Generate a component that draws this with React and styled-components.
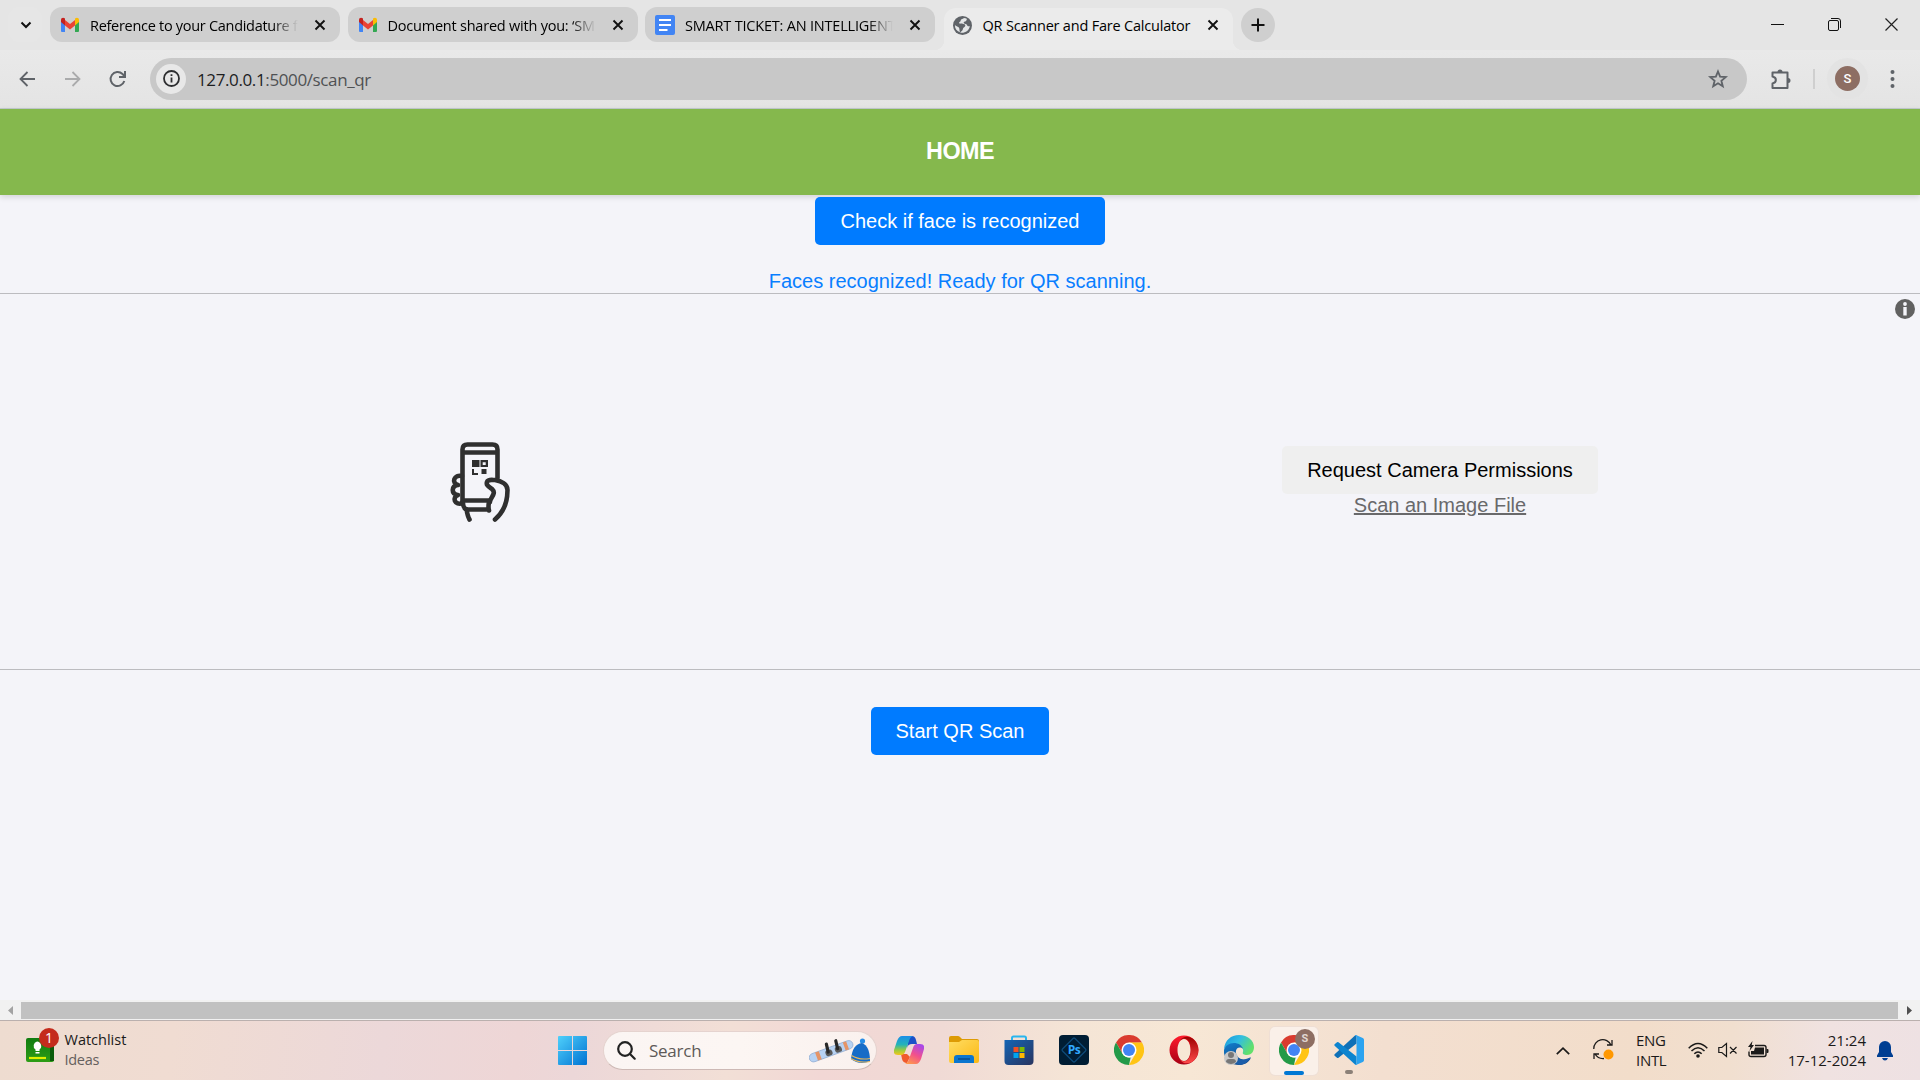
import React from "react";
import styled, { createGlobalStyle } from "styled-components";

const Global = createGlobalStyle`
  *, *::before, *::after { box-sizing: border-box; }
  html, body { margin: 0; padding: 0; overflow: hidden; }
  svg { display: block; flex: none; }
`;

const uiFont = `"Open Sans", "Noto Sans", sans-serif`;
const pageFont = `"Liberation Sans", Arial, sans-serif`;

const Screen = styled.div`
  width: 1920px;
  height: 1080px;
  display: flex;
  flex-direction: column;
  overflow: hidden;
  background: #f4f4f9;
  font-family: ${uiFont};
  color: #111;
`;

/* ---------- browser chrome ---------- */
const TabStrip = styled.div`
  height: 50px;
  flex: none;
  display: flex;
  align-items: flex-start;
  padding: 7px 0 0 8px;
  background: #e5e5e5;
`;
const TabSearch = styled.div`
  width: 34px;
  height: 35px;
  margin-right: 8px;
  padding-left: 1px;
  border-radius: 11px;
  background: #e6e6e6;
  display: grid;
  place-items: center;
`;
const Tab = styled.div`
  width: 290px;
  height: 35px;
  margin-right: 7.5px;
  padding: 0 10px;
  border-radius: 12px;
  background: #cfcfcf;
  display: flex;
  align-items: center;
`;
const ActiveTab = styled(Tab)`
  position: relative;
  width: 289px;
  height: 42px;
  margin: 1px 8px 0 1px;
  padding: 0 10px 8px 9px;
  border-radius: 12px 12px 0 0;
  background: #ebebeb;
  &::before, &::after {
    content: "";
    position: absolute;
    bottom: 0;
    width: 10px;
    height: 10px;
  }
  &::before { left: -10px; background: radial-gradient(circle at 0 0, transparent 10px, #ebebeb 10.5px); }
  &::after { right: -10px; background: radial-gradient(circle at 100% 0, transparent 10px, #ebebeb 10.5px); }
`;
const Favicon = styled.div`
  width: 20px;
  height: 20px;
  margin-right: 10px;
  display: grid;
  place-items: center;
`;
const TabTitle = styled.div`
  flex: 1;
  min-width: 0;
  padding-top: ${(p) => (p.$fade ? 2 : 1)}px;
  white-space: nowrap;
  font-size: 14.5px;
  line-height: 22px;
  letter-spacing: ${(p) => p.$track}px;
  color: #000;
  mask-image: ${(p) => (p.$fade ? "linear-gradient(90deg, #000 87%, transparent 99%)" : "none")};
`;
const TabClose = styled.div`
  width: 20px;
  margin-left: 10px;
  display: grid;
  place-items: center;
`;
const NewTab = styled.div`
  width: 34px;
  height: 34px;
  margin-top: 1px;
  border-radius: 50%;
  background: #cfcfcf;
  display: grid;
  place-items: center;
`;
const WindowControls = styled.div`
  margin-left: auto;
  display: flex;
  height: 35px;
`;
const WindowButton = styled.div`
  width: 57px;
  display: grid;
  place-items: center;
`;
const Toolbar = styled.div`
  height: 59px;
  flex: none;
  display: flex;
  align-items: center;
  padding: 0 19px 1px 17px;
  background: linear-gradient(#e9e9e9, #e4e4e4);
  border-bottom: 1px solid #c3cbce;
`;
const NavIcons = styled.div`
  display: flex;
  gap: 24px;
  width: 133px;
`;
const AddressBar = styled.div`
  width: 1597px;
  height: 42px;
  flex: none;
  border-radius: 21px;
  background: #c8c8c8;
  display: flex;
  align-items: center;
  padding: 0 18px 0 6px;
`;
const SiteInfo = styled.div`
  width: 30px;
  height: 30px;
  border-radius: 50%;
  background: #e8e8e8;
  display: grid;
  place-items: center;
  margin-right: 11px;
`;
const Url = styled.div`
  flex: 1;
  padding-top: 2px;
  font-size: 17px;
  line-height: 24px;
  letter-spacing: -0.38px;
  color: #4f5153;
  span { color: #1c1d1f; }
`;
const Actions = styled.div`
  flex: 1;
  display: flex;
  align-items: center;
  justify-content: flex-end;
`;
const Divider = styled.div`
  width: 2px;
  height: 20px;
  background: #cfcfcf;
  margin: 0 12px 0 21px;
`;
const AvatarRing = styled.div`
  width: 41px;
  height: 41px;
  border-radius: 50%;
  background: #e3e3e3;
  display: grid;
  place-items: center;
  margin-right: 15px;
`;
const Avatar = styled.div`
  width: ${(p) => p.$size}px;
  height: ${(p) => p.$size}px;
  border-radius: 50%;
  background: #8d6e63;
  color: #fff;
  display: grid;
  place-items: center;
  font: ${(p) => p.$weight} ${(p) => p.$text}px/1 Roboto, sans-serif;
`;

/* ---------- web page ---------- */
const Page = styled.main`
  height: 911px;
  flex: none;
  display: flex;
  flex-direction: column;
  align-items: center;
  background: #f4f4f9;
  font-family: ${pageFont};
  font-size: 20px;
`;
const NavBar = styled.header`
  width: 100%;
  height: 86px;
  flex: none;
  display: flex;
  align-items: center;
  justify-content: center;
  padding-bottom: 2px;
  background: #85b84d;
  box-shadow: 0 2px 6px rgba(0, 0, 0, 0.14);
  color: #fff;
  font-size: 23.4px;
  font-weight: 700;
  letter-spacing: -0.6px;
`;
const Button = styled.button`
  height: 48px;
  flex: none;
  width: ${(p) => p.$width}px;
  padding: 0;
  margin-top: ${(p) => p.$top || 0}px;
  border: 0;
  border-radius: 5px;
  background: ${(p) => (p.$plain ? "#efefef" : "#007bff")};
  color: ${(p) => (p.$plain ? "#000" : "#fff")};
  font-family: ${pageFont};
  font-size: 20px;
  line-height: 23px;
`;
const Status = styled.p`
  margin: 25px 0 0;
  height: 23px;
  line-height: 23px;
  color: #087eff;
`;
const Reader = styled.section`
  position: relative;
  width: 100%;
  height: 377px;
  flex: none;
  display: grid;
  grid-template-columns: 1fr 1fr;
  border-top: 1px solid #bcbcc0;
  border-bottom: 1px solid #bcbcc0;
`;
const ReaderPane = styled.div`
  display: flex;
  flex-direction: column;
  align-items: center;
  padding-top: ${(p) => p.$top}px;
`;
const InfoBadge = styled.div`
  position: absolute;
  top: 5px;
  right: 5px;
`;
const FileLink = styled.span`
  line-height: 23px;
  color: #69696b;
  text-decoration: underline;
  text-decoration-thickness: 2px;
  text-underline-offset: 1px;
`;
const ScrollBar = styled.div`
  width: 100%;
  height: 20px;
  margin-top: auto;
  display: flex;
  align-items: center;
  background: #f1f1f1;
`;
const ScrollArrow = styled.div`
  width: ${(p) => p.$width}px;
  display: flex;
  justify-content: center;
`;
const ScrollThumb = styled.div`
  flex: 1;
  height: 17px;
  margin-top: 1px;
  background: #c1c1c1;
`;

/* ---------- taskbar ---------- */
const Taskbar = styled.footer`
  height: 60px;
  flex: none;
  display: flex;
  align-items: center;
  border-top: 1px solid #bab0ae;
  background: linear-gradient(96deg, #eedcd0 0%, #f0dcd2 9%, #ecd8d9 20%, #eed6d6 27%, #ecd7d8 30%, #f2dfd6 38%, #f2d7d5 43%, #f0dad5 49%, #f5e5d6 56%, #f7e7d5 62%, #f3dfd0 72%, #f2ddca 85%, #f1dfcf 90%, #f0e2e1 95%, #eee1e3 100%);
`;
const Widget = styled.div`
  width: 558px;
  flex: none;
  display: flex;
  align-items: center;
  padding-left: 25px;
`;
const WidgetText = styled.div`
  margin-left: 5.5px;
  padding-bottom: 1px;
  font-size: 14.5px;
  line-height: 20px;
  letter-spacing: 0;
  color: #1b1a19;
  div + div { color: #65605d; letter-spacing: -0.3px; }
`;
const WidgetBadge = styled.div`
  position: absolute;
  left: 14px;
  top: -5px;
  width: 20px;
  height: 20px;
  border-radius: 50%;
  background: #c42b1c;
  color: #fff;
  font-size: 14px;
  line-height: 20px;
  text-align: center;
`;
const WidgetIcon = styled.div`
  position: relative;
  height: 32px;
  width: 34px;
  margin-bottom: 4px;
`;
const SearchBox = styled.div`
  width: 274px;
  height: 39px;
  margin: 0 17px 0 16px;
  border-radius: 20px;
  background: linear-gradient(90deg, #fbf5f3, #fcf6f3 50%, #faf1ee);
  border: 1px solid #e5d3cf;
  border-bottom-color: #cdb9b5;
  display: flex;
  align-items: center;
  padding: 0 5px 0 13px;
`;
const SearchLabel = styled.div`
  flex: 1;
  margin-left: 13px;
  font-size: 17px;
  letter-spacing: -0.25px;
  color: #5e5a58;
`;
const Apps = styled.div`
  display: flex;
  align-items: center;
  gap: 7px;
  margin-left: -9px;
`;
const AppSlot = styled.div`
  position: relative;
  width: 48px;
  height: 48px;
  border-radius: 5px;
  display: grid;
  place-items: center;
  padding-bottom: 1px;
  background: ${(p) => (p.$active ? "#faf0e9" : "transparent")};
  box-shadow: ${(p) => (p.$active ? "0 0 0 1px #efdfd5" : "none")};
`;
const RunMark = styled.div`
  position: absolute;
  bottom: ${(p) => (p.$active ? 0 : 1)}px;
  left: 50%;
  transform: translateX(-50%);
  width: ${(p) => (p.$active ? 20 : 8)}px;
  height: 4px;
  border-radius: 2px;
  background: ${(p) => (p.$active ? "#0078d4" : "#8b8078")};
`;
const Profile = styled.div`
  position: absolute;
  right: 3px;
  top: 2px;
  > div { color: #e0d6d2; }
`;
const Tray = styled.div`
  margin-left: auto;
  display: flex;
  align-items: center;
  padding-right: 26px;
  color: #1b1a19;
`;
const TrayLabel = styled.div`
  width: ${(p) => p.$width}px;
  margin-left: ${(p) => p.$left}px;
  text-align: ${(p) => p.$align || "left"};
  font-size: 15px;
  line-height: 20px;
  padding-bottom: 2px;
  white-space: nowrap;
  letter-spacing: ${(p) => p.$track || 0}px;
`;
const StatusIcons = styled.div`
  display: flex;
  align-items: center;
  gap: 10px;
  margin-left: 21px;
  padding-bottom: 1px;
`;
const Bell = styled.div`
  margin-left: 11px;
`;

/* ---------- icons ---------- */
const Gmail = () => (
  <svg width="20" height="16" viewBox="0 0 20 16">
    <path d="M1 3v11a1 1 0 0 0 1 1h3V6z" fill="#4285f4" />
    <path d="M19 3v11a1 1 0 0 1-1 1h-3V6z" fill="#34a853" />
    <path d="M5 3l5 4 5-4v5.500l-5 4-5-4z" fill="#ea4335" />
    <path d="M1 3c0-2 2-3 4-1.500v7L1 5z" fill="#c5221f" />
    <path d="M19 3c0-2-2-3-4-1.500v7L19 5z" fill="#fbbc04" />
  </svg>
);
const Docs = () => (
  <svg width="20" height="20" viewBox="0 0 20 20">
    <rect width="20" height="20" rx="2" fill="#4285f4" />
    <path d="M4 5h12M4 10h12M4 15h8.500" stroke="#fff" strokeWidth="2.200" />
  </svg>
);
const Globe = () => (
  <svg width="19" height="19" viewBox="2 2 20 20">
    <path fill="#5f6368" d="M12 2a10 10 0 1 0 0 20 10 10 0 0 0 0-20z" />
    <path fill="#e4e6e7" d="M13.500 4.200c-1 1.200-3.500 1-3.500 2.800 0 1.300-1.600 1-1.600 2.200 0 1.400 3.600.7 5.600 1.600 1.800.8.700 2.800-.6 3.400-1.200.6-.6 2-1.600 3-.7.700-1.700 1-2.200 2.300 4.500 1 9.600-2 10.100-7-1.200.6-2.600.3-3-1-.5-1.300-2.300-.8-3.200-1.800-.9-1.200.5-2.300 2-2.300.9 0 .4-1.600 1.400-2.200a8 8 0 0 0-3.400-1z" />
    <path fill="#e4e6e7" d="M4 11.500c1.500 1.800 4.600 1.700 4.700 3.800 0 1.300.4 2 .5 3.800C5.800 18 3.900 15 4 11.500z" />
  </svg>
);
const Cross = () => (
  <svg width="12" height="12" viewBox="0 0 12 12">
    <path d="M1.500 1.500l9 9m0-9l-9 9" stroke="#111" strokeWidth="1.900" />
  </svg>
);
const PhoneInHand = () => (
  <svg width="80" height="80" viewBox="0 0 80 80" fill="none" stroke="#2f2f2f" strokeWidth="4.600" strokeLinecap="round" strokeLinejoin="round">
    <path d="M22.500 61V7.500q0-5 5-5h25q5 0 5 5V36M22.500 10.500h35M23 58.500h26" />
    <path d="M22 34c-8-2-11 7-4 9-7 1-7 9 0 10-6 2-4 11 5 8" />
    <path d="M22.500 60c1 5 2 7.500 4 7.500h21.500M49 60q-1 5 0 8.500M26.500 67q1 7 3 10.500" />
    <path d="M50 60c0-5 7-8 2-13-4-3-6-4-5-7 1-3 5-2 8-2 6 1 12.500 4 12.500 10 0 13-5.500 23.500-12.500 29.500" />
    <g stroke="none" fill="#2f2f2f">
      <path d="M32 18h7.500v7h-7.500zM32 27h2v4h4v2h-6zM41.500 27h5v5h-5z" />
      <path fillRule="evenodd" d="M40.500 18h7.500v7h-7.500zM42.700 20.200v2.800h3v-2.800z" />
    </g>
  </svg>
);
const Chrome = () => (
  <svg width="30" height="30" viewBox="0 0 48 48">
    <path fill="#da3b2f" d="M3.200 12A24 24 0 0 1 44.800 12L24 12.500 13.600 30z" />
    <path fill="#ffc414" d="M44.800 12A24 24 0 0 1 24 48L34.400 30 24 12z" />
    <path fill="#239a48" d="M24 48A24 24 0 0 1 3.200 12L13.600 30q4 7 13 6z" />
    <circle cx="24" cy="24" r="12" fill="#fff" />
    <circle cx="24" cy="24" r="9.600" fill="#4284f3" />
  </svg>
);
const Copilot = () => (
  <svg width="30" height="28" viewBox="0 0 30 28">
    <defs>
      <linearGradient id="cpa" x1="0" y1="0" x2="0" y2="1"><stop offset="0" stopColor="#1b8ee8" /><stop offset=".45" stopColor="#23b3b9" /><stop offset=".75" stopColor="#9ccb3c" /><stop offset="1" stopColor="#f4c51c" /></linearGradient>
      <linearGradient id="cpb" x1=".7" y1="0" x2=".2" y2="1"><stop offset="0" stopColor="#a948e8" /><stop offset=".5" stopColor="#f2508c" /><stop offset="1" stopColor="#ff9a4a" /></linearGradient>
    </defs>
    <path d="M15 0h3q3 0 4 4l1 4h-5q-4 0-5 4z" fill="#1b50c8" />
    <path d="M7 18h6l3 3-3 6q-4 0-5-4z" fill="#f05a2c" />
    <path d="M8 0h11q-3 1-4 5l-4 11q-1 3-4 3H4q-5 0-4-5L3 5q2-5 5-5z" fill="url(#cpa)" />
    <path d="M22 28H11q3-1 4-5l4-11q1-4 4-4h3q5 0 4 5l-3 10q-2 5-5 5z" fill="url(#cpb)" />
  </svg>
);
const Explorer = () => (
  <svg width="30" height="28" viewBox="0 0 30 28">
    <defs><linearGradient id="fold" x2="1" y2="1"><stop stopColor="#ffdd63" /><stop offset="1" stopColor="#fbb813" /></linearGradient></defs>
    <path d="M0 2q0-2 2-2h7q1 0 2 1l2 2h15q2 0 2 2v5H0z" fill="#dd9b05" />
    <path d="M0 6h10l3-2h15q2 0 2 2v19q0 2-2 2H2q-2 0-2-2z" fill="url(#fold)" />
    <path d="M5 27v-5q0-3 3-3h14q3 0 3 3v5z" fill="#0b76cf" />
    <path d="M9 23h12" stroke="#064d8f" strokeWidth="1.500" />
  </svg>
);
const Store = () => (
  <svg width="30" height="30" viewBox="0 0 30 30">
    <defs><linearGradient id="bag" x2="1" y2="1"><stop stopColor="#1465b5" /><stop offset="1" stopColor="#29345f" /></linearGradient></defs>
    <path d="M8 7V3q0-1.500 1.500-1.500h11Q22 1.500 22 3v4" fill="none" stroke="#29b5ee" strokeWidth="2" />
    <path d="M.5 5h29v21q0 4-4 4h-21q-4 0-4-4z" fill="url(#bag)" />
    <path fill="#f25022" d="M9.500 12h5v5h-5z" /><path fill="#7fba00" d="M15.500 12h5v5h-5z" />
    <path fill="#00a4ef" d="M9.500 18h5v5h-5z" /><path fill="#ffb900" d="M15.500 18h5v5h-5z" />
  </svg>
);
const PsTile = styled.div`
  width: 30px;
  height: 30px;
  border-radius: 4px;
  background: #001d34;
  display: grid;
  place-items: center;
  > * { grid-area: 1 / 1; }
  span { font: 700 12px/1 "Open Sans", sans-serif; letter-spacing: -0.4px; color: #31a8ff; }
`;
const Photoshop = () => (
  <PsTile>
    <svg width="28" height="28" viewBox="0 0 28 28"><path d="M13 2.500q1-1 2 0L25.500 13q1 1 0 2L15 25.500q-1 1-2 0L2.500 15q-1-1 0-2z" fill="none" stroke="#0d4a78" strokeWidth="1.300" /></svg>
    <span>Ps</span>
  </PsTile>
);
const Opera = () => (
  <svg width="30" height="30" viewBox="0 0 30 30">
    <defs>
      <linearGradient id="opa" x2="0" y2="1"><stop stopColor="#ff1b2d" /><stop offset="1" stopColor="#a70014" /></linearGradient>
      <linearGradient id="opb" x2="0" y2="1"><stop stopColor="#9c0000" /><stop offset="1" stopColor="#ff4b4b" /></linearGradient>
    </defs>
    <path fillRule="evenodd" fill="url(#opa)" d="M15 .5a14.500 14.500 0 1 0 0 29 14.500 14.500 0 0 0 0-29zm0 3.500c4 0 6.500 5 6.500 11S19 26 15 26 8.500 21 8.500 15 11 4 15 4z" />
    <path fill="url(#opb)" d="M11 5.500C14 .5 20 .8 24 3.800a14.500 14.500 0 0 1 0 22.400c-4 3-10 3.300-13-1.700 6 5 11-1 11-9.500S17 .5 11 5.500z" />
  </svg>
);
const Edge = () => (
  <svg width="30" height="30" viewBox="0 0 30 30">
    <defs>
      <linearGradient id="ega" x2="1" y2=".5"><stop stopColor="#1795dc" /><stop offset=".5" stopColor="#32bde2" /><stop offset="1" stopColor="#62e06b" /></linearGradient>
      <linearGradient id="egb" x2=".5" y2="1"><stop stopColor="#127fce" /><stop offset="1" stopColor="#114a8b" /></linearGradient>
    </defs>
    <path d="M0 14C1 5 7 0 15 0c9 0 15 6 15 12 0 5-3 8-7 8-3 0-5-1-4-3 1-3-2-8-8-8-5 0-9 2-11 5z" fill="url(#ega)" />
    <path d="M0 15c1-4 5-7 10-7 4 0 8 2 9 6-3-3-8-1-7 4 1 6 9 9 15 5-3 5-7 7-12 7C7 30-1 24 0 15z" fill="url(#egb)" />
    <path d="M12 14c-4 8 5 14 15 8-3 5-7 8-12 8-5-2-9-9-3-16z" fill="#1b5da9" />
    <circle cx="7" cy="23" r="7" fill="#c8c8c8" />
    <circle cx="7" cy="20" r="3" fill="#777" /><path d="M2 27q0-3 3-3h4q3 0 3 3-5 4-10 0z" fill="#777" />
  </svg>
);
const VSCode = () => (
  <svg width="30" height="30" viewBox="0 0 100 100">
    <path d="M75 2v26L15 76q-3 2-5 0l-7-6q-4-3 0-7L70 2q3-3 5 0z" fill="#0f70b7" />
    <path d="M75 98V72L15 24q-3-2-5 0l-7 6q-4 3 0 7L70 98q3 3 5 0z" fill="#0d84cf" />
    <path d="M73 0l23 10q4 2 4 6v68q0 4-4 6L73 100q-3 0-3-4 5 3 5-3V7q0-6-5-3 0-4 3-4z" fill="#2ba3f0" />
  </svg>
);
const Snow = () => (
  <svg width="62" height="30" viewBox="0 0 62 30">
    <g transform="rotate(-20 22 15)">
      <rect x="-1" y="11" width="46" height="8.500" rx="4.200" fill="#b7d2f3" stroke="#8fabd2" strokeWidth=".7" />
      <path d="M6.500 11h4v8.500h-4zM36 11h3.500v8.500H36z" fill="#e59467" />
      <rect x="16" y="13" width="7" height="6" rx="2.500" fill="#5a5a5a" /><rect x="26" y="13" width="7" height="6" rx="2.500" fill="#5a5a5a" />
      <path d="M20 7l-1 8M30 7l-1 8" stroke="#282828" strokeWidth="3.200" strokeLinecap="round" />
    </g>
    <circle cx="53.500" cy="5" r="2.600" fill="#258ce6" />
    <path d="M42 23Q43.500 8 53 7q8 3 8 18-10 5-19-2z" fill="#176cc7" />
    <path d="M42.500 19.500q8 5 18.500 3M42 22.500q8 5 19 3" fill="none" stroke="#e9b75b" strokeWidth="1.100" />
  </svg>
);

const tabs = [
  { title: "Reference to your Candidature f", icon: <Gmail />, track: -0.29 },
  { title: "Document shared with you: ‘SM", icon: <Gmail />, track: -0.22 },
  { title: "SMART TICKET: AN INTELLIGENT", icon: <Docs />, track: -0.2 },
];
const pinned = [Copilot, Explorer, Store, Photoshop, Chrome, Opera, Edge];

export default function App() {
  return (
    <Screen>
      <Global />
      <TabStrip>
        <TabSearch>
          <svg width="12" height="8" viewBox="0 0 12 8" fill="none" stroke="#111" strokeWidth="2"><path d="M1.500 1.500L6 6l4.500-4.500" /></svg>
        </TabSearch>
        {tabs.map((t) => (
          <Tab key={t.title}>
            <Favicon>{t.icon}</Favicon>
            <TabTitle $fade $track={t.track}>{t.title}</TabTitle>
            <TabClose><Cross /></TabClose>
          </Tab>
        ))}
        <ActiveTab>
          <Favicon><Globe /></Favicon>
          <TabTitle $track={-0.2}>QR Scanner and Fare Calculator</TabTitle>
          <TabClose><Cross /></TabClose>
        </ActiveTab>
        <NewTab>
          <svg width="14" height="14" viewBox="0 0 14 14" stroke="#111" strokeWidth="2"><path d="M7 .5v13M.5 7h13" /></svg>
        </NewTab>
        <WindowControls>
          <WindowButton><svg width="13" height="13" viewBox="0 0 13 13"><path d="M0 6.500h13" stroke="#111" /></svg></WindowButton>
          <WindowButton><svg width="13" height="13" viewBox="0 0 13 13" fill="none" stroke="#111"><rect x=".5" y="2.500" width="10" height="10" rx="1.500" /><path d="M3 .5h7q2.500 0 2.500 2.500v7" /></svg></WindowButton>
          <WindowButton><svg width="13" height="13" viewBox="0 0 13 13"><path d="M.5.5l12 12m0-12l-12 12" stroke="#222" strokeWidth="1.200" /></svg></WindowButton>
        </WindowControls>
      </TabStrip>
      <Toolbar>
        <NavIcons>
          <svg width="21" height="20" viewBox="0 0 21 20" fill="none" stroke="#5f6368" strokeWidth="1.800"><path d="M18 10H4M10.500 3L3.500 10l7 7" /></svg>
          <svg width="21" height="20" viewBox="0 0 21 20" fill="none" stroke="#aaabac" strokeWidth="1.800"><path d="M3 10h14M10.500 3l7 7-7 7" /></svg>
          <svg width="21" height="20" viewBox="0 0 21 20" fill="none" stroke="#5f6368" strokeWidth="2"><path d="M17.300 12A7 7 0 1 1 15.500 5l2 2.200" /><path d="M18 2v6h-6" /></svg>
        </NavIcons>
        <AddressBar>
          <SiteInfo>
            <svg width="17" height="17" viewBox="0 0 17 17" fill="none" stroke="#2d2e30" strokeWidth="1.800"><circle cx="8.500" cy="8.500" r="7.500" /><path d="M8.500 7.500v5M8.500 4.300v1.800" /></svg>
          </SiteInfo>
          <Url><span>127.0.0.1</span>:5000/scan_qr</Url>
          <svg width="22" height="22" viewBox="0 0 24 24" fill="none" stroke="#5f6368" strokeWidth="2"><path d="M12 3.800l2.300 5.700 6.100.4-4.700 4 1.500 6-5.200-3.300-5.200 3.300 1.500-6-4.700-4 6.100-.4z" /></svg>
        </AddressBar>
        <Actions>
          <svg width="22" height="22" viewBox="0 0 22 22" fill="none" stroke="#5f6368" strokeWidth="2"><path d="M2.500 4.500h15V20h-15v-4.500c4.500-1 4.500-6 0-7z" strokeLinejoin="round" /><path d="M7.500 4a2.500 2.500 0 0 1 5 0zM18 10a2.500 2.500 0 0 1 0 5z" fill="#5f6368" stroke="none" /></svg>
          <Divider />
          <AvatarRing><Avatar $size={25} $text={13} $weight={500}>S</Avatar></AvatarRing>
          <svg width="18" height="20" viewBox="0 0 18 20" fill="#5f6368"><circle cx="9.500" cy="3" r="2" /><circle cx="9.500" cy="10" r="2" /><circle cx="9.500" cy="17" r="2" /></svg>
        </Actions>
      </Toolbar>

      <Page>
        <NavBar>HOME</NavBar>
        <Button $width={290} $top={2}>Check if face is recognized</Button>
        <Status>Faces recognized! Ready for QR scanning.</Status>
        <Reader>
          <ReaderPane $top={148}><PhoneInHand /></ReaderPane>
          <ReaderPane $top={152}>
            <Button $width={316} $plain>Request Camera Permissions</Button>
            <FileLink>Scan an Image File</FileLink>
          </ReaderPane>
          <InfoBadge>
            <svg width="20" height="20" viewBox="0 0 20 20"><circle cx="10" cy="10" r="10" fill="#616161" /><circle cx="10" cy="5" r="1.900" fill="#f4f4f9" /><path d="M8.300 8h3.400v8.500H8.300z" fill="#f4f4f9" /></svg>
          </InfoBadge>
        </Reader>
        <Button $width={178} $top={37}>Start QR Scan</Button>
        <ScrollBar>
          <ScrollArrow $width={21}><svg width="5" height="9" viewBox="0 0 5 9"><path d="M5 0v9L0 4.500z" fill="#a3a3a3" /></svg></ScrollArrow>
          <ScrollThumb />
          <ScrollArrow $width={22}><svg width="5" height="9" viewBox="0 0 5 9"><path d="M0 0v9l5-4.500z" fill="#505050" /></svg></ScrollArrow>
        </ScrollBar>
      </Page>

      <Taskbar>
        <Widget>
          <WidgetIcon>
            <svg width="30" height="32" viewBox="0 0 30 32">
              <defs><linearGradient id="wg" x2="0" y2="1"><stop stopColor="#107c10" /><stop offset="1" stopColor="#2d9d16" /></linearGradient></defs>
              <rect x="1" y="5" width="28" height="24" rx="2" fill="url(#wg)" /><path d="M25 5h4v23h-4z" fill="#0b5c0b" />
              <path d="M12 8.500a4.500 4.500 0 0 1 2.500 8v1.500h-4v-1.500a4.500 4.500 0 0 1 1.500-8zM10.500 19h4v1.500h-4z" fill="#fff" /><path d="M4 25h17" stroke="#dff000" strokeWidth="2.200" />
            </svg>
            <WidgetBadge>1</WidgetBadge>
          </WidgetIcon>
          <WidgetText><div>Watchlist</div><div>Ideas</div></WidgetText>
        </Widget>
        <svg width="29" height="29" viewBox="0 0 29 29">
          <defs><linearGradient id="win" x2="1" y2="1"><stop stopColor="#4fd0fb" /><stop offset="1" stopColor="#0072d2" /></linearGradient></defs>
          <path d="M1 0h13v14H0V1q0-1 1-1zM15 0h13q1 0 1 1v13H15zM0 15h14v14H1q-1 0-1-1zM15 15h14v13q0 1-1 1H15z" fill="url(#win)" />
        </svg>
        <SearchBox>
          <svg width="19" height="19" viewBox="0 0 19 19" fill="none" stroke="#222" strokeWidth="2.200" strokeLinecap="round"><circle cx="8" cy="8" r="6.800" /><path d="M13 13l4.700 4.700" /></svg>
          <SearchLabel>Search</SearchLabel>
          <Snow />
        </SearchBox>
        <Apps>
          {pinned.map((Icon, i) => <AppSlot key={i}><Icon /></AppSlot>)}
          <AppSlot $active>
            <Chrome />
            <Profile><Avatar $size={20} $text={11} $weight={700}>S</Avatar></Profile>
            <RunMark $active />
          </AppSlot>
          <AppSlot><VSCode /><RunMark /></AppSlot>
        </Apps>
        <Tray>
          <svg width="14" height="8" viewBox="0 0 14 8" fill="none" stroke="#1b1a19" strokeWidth="1.700"><path d="M.8 7.200L7 1.200l6.200 6" /></svg>
          <TrayLabel $width={20} $left={23}>
            <svg width="21" height="21" viewBox="0 0 21 21" fill="none" stroke="#1b1a19" strokeWidth="1.300"><path d="M.8 10A9 9 0 0 1 18 6M19 1v5h-5M1 20v-5h5M2 15q3 5 9 4.500" /><circle cx="15.500" cy="15.500" r="5" fill="#ff9800" stroke="none" /></svg>
          </TrayLabel>
          <TrayLabel $width={31} $left={23} $track={-0.3}>ENG<br />INTL</TrayLabel>
          <StatusIcons>
            <svg width="20" height="16" viewBox="0 0 20 16" fill="none" stroke="#1b1a19" strokeWidth="1.500"><path d="M.7 6.300q9.300-9.600 18.600 0M3.500 9q6.500-6.600 13 0M6.300 11.800q3.700-3.800 7.400 0" /><circle cx="10" cy="14" r="1.800" fill="#1b1a19" stroke="none" /></svg>
            <svg width="20" height="16" viewBox="0 0 20 16" fill="none" stroke="#1b1a19" strokeWidth="1.200"><path d="M.8 5.500h3l4.700-4v13l-4.700-4h-3zM12 5l6.500 6.500M18.500 5L12 11.500" /></svg>
            <svg width="21" height="18" viewBox="0 0 21 18"><path d="M7 4.500h9q2 0 2 2v7q0 2-2 2H3q-2 0-2-2v-3" fill="none" stroke="#1b1a19" strokeWidth="1.400" /><path d="M7 6.500h9v7H3V10h3zM18.500 8h1q1 0 1 1v2q0 1-1 1h-1zM4.500 0L0 6h2.500L1.500 10 6 4H3.700z" fill="#1b1a19" /></svg>
          </StatusIcons>
          <TrayLabel $width={79} $left={18} $align="right">21:24<br />17-12-2024</TrayLabel>
          <Bell>
            <svg width="17" height="20" viewBox="0 0 17 20"><path d="M8 0a6 6 0 0 1 6 6v5l2 3.500V16H0v-1.500L2 11V6a6 6 0 0 1 6-6zM5 17h6q-1 2.500-3 2.500T5 17z" fill="#003e92" /></svg>
          </Bell>
        </Tray>
      </Taskbar>
    </Screen>
  );
}
